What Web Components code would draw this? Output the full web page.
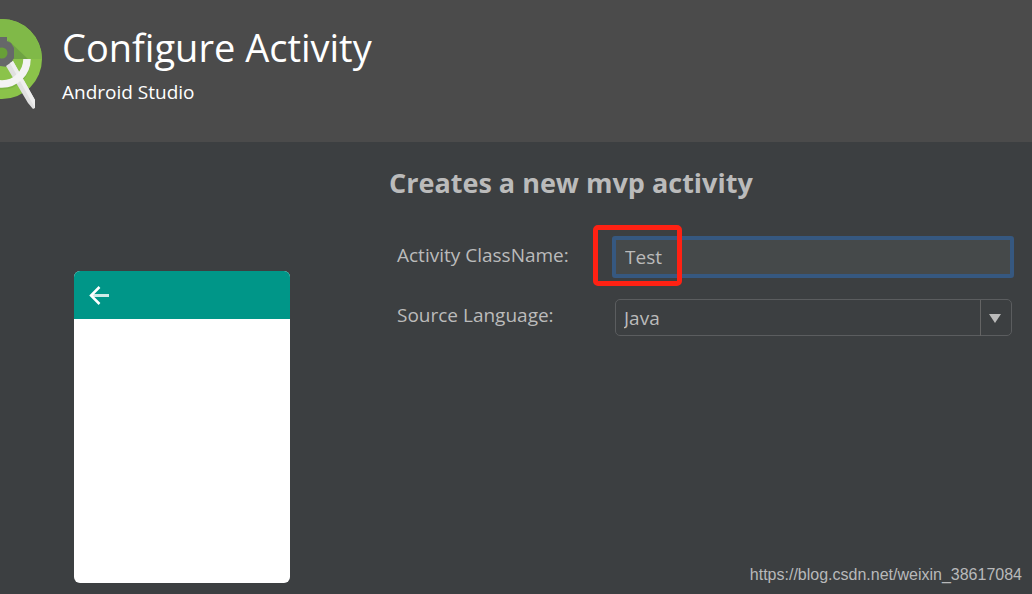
<!DOCTYPE html>
<html lang="en">
<head>
<meta charset="utf-8">
<title>Configure Activity</title>
<style>
  html, body { margin: 0; }
  body { background: #3c3f41; color: #bbbbbb; font-family: "Open Sans", "Noto Sans", sans-serif; }
</style>
</head>
<body>
<activity-wizard>
  <wizard-header slot="header" heading="Configure Activity" product="Android Studio"></wizard-header>
  <phone-preview slot="preview"></phone-preview>
  <activity-form slot="form"></activity-form>
  <source-link slot="overlay"></source-link>
</activity-wizard>

<script>
class BaseElement extends HTMLElement {
  constructor() {
    super();
    const t = document.createElement('template');
    t.innerHTML = this.constructor.markup;
    this.attachShadow({ mode: 'open' }).append(t.content.cloneNode(true));
  }
}

class ActivityWizard extends BaseElement {
  static markup = `
    <style>
      :host { display: flex; flex-direction: column; position: relative; min-height: 100vh; box-sizing: border-box; overflow: hidden; }
      main { flex: 1; display: grid; grid-template-columns: 216px minmax(0, 1fr); column-gap: 99px; align-items: start; padding: 0 18px 11px 74px; }
    </style>
    <slot name="header"></slot>
    <main><slot name="preview"></slot><slot name="form"></slot></main>
    <slot name="overlay"></slot>`;
}

class StudioLogo extends BaseElement {
  static markup = `
    <style>:host { display: block; } svg { display: block; }</style>
    <svg width="44" height="96" viewBox="0 16 44 96" aria-hidden="true">
      <circle cx="2" cy="59" r="40" fill="#8bc34a"/>
      <path d="M-38 59a40 40 0 0 1 80 0z" fill="#80b948"/>
      <path d="M8 40l20 19H13z" fill="#6a9c42" opacity=".8"/>
      <path d="M0 37h7v4l4 2 3 5v10l-3 5-3 4-8-1z" fill="#666869"/>
      <circle cx="2" cy="53" r="5.500" fill="#689f38"/>
      <path d="M27 59A25 25 0 0 1 2 84Q-2 84-8 82" transform="translate(0 2)" fill="none" stroke="#558b2f" stroke-opacity=".25" stroke-width="7"/>
      <path d="M6 66l7-5 22 39v8l-2 1-5-6z" fill="#e0e0e0"/>
      <path d="M10 63l3-2 22 39v8z" fill="#eeeeee"/>
      <path d="M27 59A25 25 0 0 1 2 84Q-2 84-8 82" fill="none" stroke="#f3f3f3" stroke-width="7.500"/>
    </svg>`;
}

class WizardHeader extends BaseElement {
  static markup = `
    <style>
      :host { display: block; background: #4b4b4b; color: #ffffff; }
      header { display: flex; align-items: flex-start; gap: 18px; height: 142px; box-sizing: border-box; padding-top: 16px; }
      h1 { margin: 3px 0 0; font-size: 38px; line-height: 56px; font-weight: 400; }
      p { margin: 3px 0 0; font-size: 19px; line-height: 28px; }
    </style>
    <header><studio-logo></studio-logo><div><h1></h1><p></p></div></header>`;
  connectedCallback() {
    this.shadowRoot.querySelector('h1').textContent = this.getAttribute('heading');
    this.shadowRoot.querySelector('p').textContent = this.getAttribute('product');
  }
}

class PhonePreview extends BaseElement {
  static markup = `
    <style>
      :host { display: block; margin-top: 129px; height: 312px; border-radius: 6px; background: #ffffff; overflow: hidden; }
      .bar { display: flex; align-items: center; height: 48px; padding-left: 15px; background: #009688; }
      svg { display: block; }
    </style>
    <div class="bar">
      <svg width="20" height="20" viewBox="0 0 20 20" fill="none" role="img" aria-label="Back">
        <path d="M2 10.500h18" stroke="#cfeae7" stroke-width="3"/>
        <path d="M10.500 2L2 10.500l8.500 8.500" stroke="#ffffff" stroke-width="2.500"/>
      </svg>
    </div>`;
}

class FormRow extends BaseElement {
  static markup = `
    <style>
      :host { display: grid; grid-template-columns: 215px minmax(0, 1fr); align-items: center; padding-left: 8px; }
    </style>
    <slot name="label"></slot><slot></slot>`;
}

class HighlightBox extends BaseElement {
  static markup = `
    <style>
      :host { display: block; position: absolute; left: -19px; top: -11px; width: 89px; height: 61px; box-sizing: border-box; border: 5px solid #ff2113; border-radius: 5px; pointer-events: none; }
    </style>`;
}

class ActivityForm extends BaseElement {
  static markup = `
    <style>
      :host { display: block; }
      h2 { margin: 21px 0 33px; font-size: 27px; line-height: 40px; font-weight: 700; }
      form { display: grid; row-gap: 21px; }
      label { font-size: 19px; line-height: 28px; margin-bottom: 5px; }
      .field { position: relative; }
      input, select { display: block; width: 100%; box-sizing: border-box; font: inherit; font-size: 19px; line-height: 28px; color: #bbbbbb; outline: none; margin: 0; }
      input { height: 42px; padding: 0 9px; border: 4px solid #365880; border-radius: 3px; background: #45494a; }
      .choice { margin: 0 2px 0 3px; }
      select { height: 37px; padding: 0 40px 0 8px; border: 1px solid #5b5d5f; border-radius: 5px; background: #3c3f41; appearance: none; }
      .arrow { position: absolute; top: 1px; right: 1px; bottom: 0; width: 30px; display: flex; align-items: center; justify-content: center; box-sizing: border-box; padding-right: 2px; width: 31px; border-left: 1px solid #646464; pointer-events: none; }
    </style>
    <h2>Creates a new mvp activity</h2>
    <form>
      <form-row>
        <label slot="label" for="name">Activity ClassName:</label>
        <div class="field"><input id="name" type="text" value="Test" spellcheck="false"><highlight-box></highlight-box></div>
      </form-row>
      <form-row>
        <label slot="label" for="lang">Source Language:</label>
        <div class="field choice">
          <select id="lang"><option>Java</option><option>Kotlin</option></select>
          <span class="arrow"><svg width="12" height="9" viewBox="0 0 12 9" aria-hidden="true"><path d="M0 0h12L6 9z" fill="#bbbbbb"/></svg></span>
        </div>
      </form-row>
    </form>`;
}

class SourceLink extends BaseElement {
  static markup = `
    <style>
      :host { display: block; position: absolute; right: 10px; bottom: 9px; font-family: "Liberation Sans", Arial, sans-serif; font-size: 16px; line-height: 20px; }
      a { color: #b8b9ba; text-decoration: none; }
    </style>
    <a href="https://blog.csdn.net/weixin_38617084">https://blog.csdn.net/weixin_38617084</a>`;
}

customElements.define('studio-logo', StudioLogo);
customElements.define('wizard-header', WizardHeader);
customElements.define('phone-preview', PhonePreview);
customElements.define('form-row', FormRow);
customElements.define('highlight-box', HighlightBox);
customElements.define('activity-form', ActivityForm);
customElements.define('source-link', SourceLink);
customElements.define('activity-wizard', ActivityWizard);
</script>
</body>
</html>
